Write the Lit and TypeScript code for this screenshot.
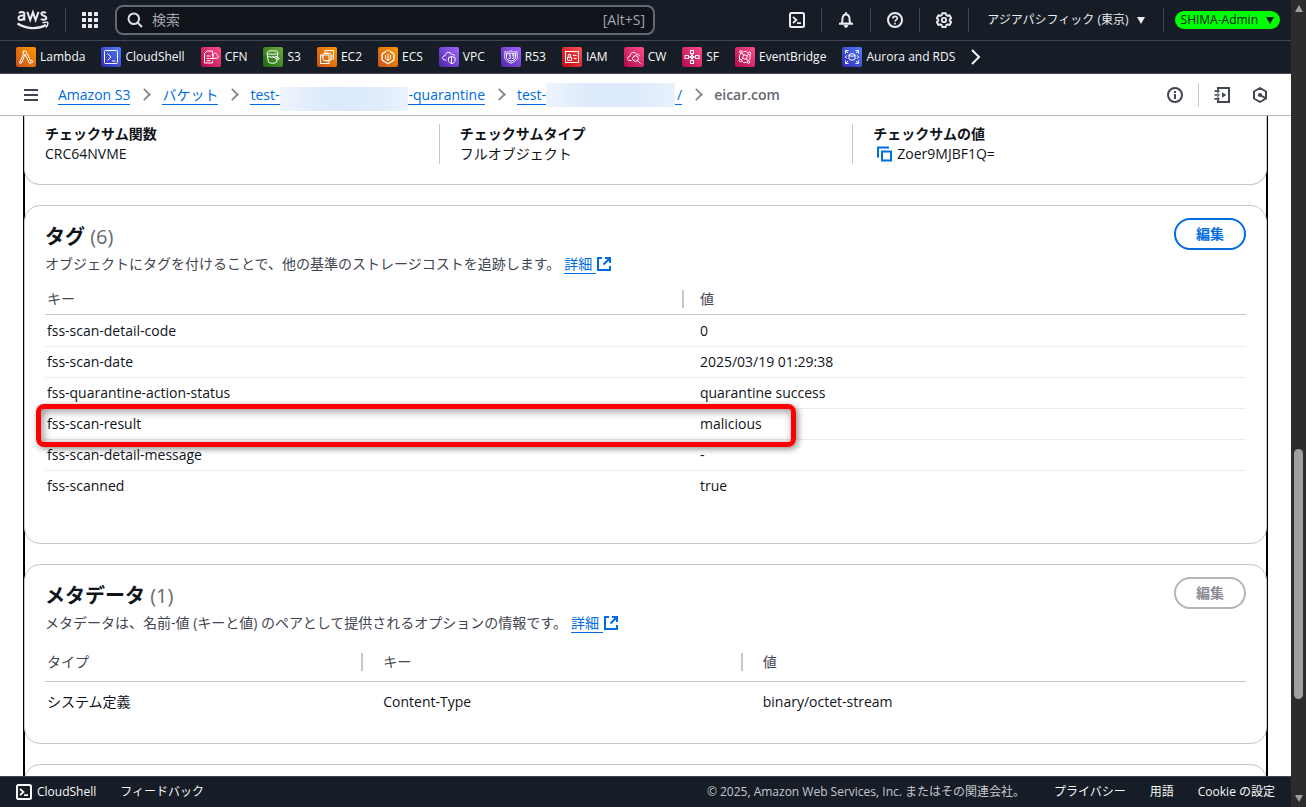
import { LitElement, html, svg, css } from "lit";
import { customElement, property } from "lit/decorators.js";

const base = css`
  *, *::before, *::after { box-sizing: border-box; }
  a { color: inherit; text-decoration: none; }
  button { font: inherit; color: inherit; background: none; border: 0; padding: 0; margin: 0; cursor: pointer; }
  svg { display: block; flex: none; fill: none; stroke: currentColor; }
`;

const icons: Record<string, unknown> = {
  menu: svg`<path d="M1 3h14M1 8h14M1 13h14" stroke-width="2"/>`,
  terminal: svg`<rect x="1" y="1" width="14" height="14" rx="1.5" stroke-width="2"/><path d="M4 5l3.4 3L4 11M8 11.2h4" stroke-width="1.8"/>`,
  bell: svg`<path d="M3.400 11.600c1-1.200 1.100-2.400 1.100-4.600 0-2.900 1.200-4.600 3.500-4.600s3.500 1.700 3.500 4.600c0 2.200.1 3.400 1.100 4.600zM1 11.800h14M8 .3v2" stroke-width="2"/><path d="M6.200 13.500c0 2.600 3.600 2.600 3.600 0z" fill="currentColor" stroke-width="1"/>`,
  help: svg`<circle cx="8" cy="8" r="7" stroke-width="2"/><path d="M5.800 6.500C5.800 3.600 10.300 3.700 10.300 6.300 10.300 7.900 8 7.900 8 9.600M8 10.800v1.700" stroke-width="1.700"/>`,
  gear: svg`<path d="M6.200 1.200h3.600l.5 1.900 1.300.8 2-.7 1.600 3-1.500 1.300v1.200l1.500 1.300-1.600 3-2-.7-1.300.8-.5 1.900H6.200l-.5-1.900-1.300-.8-2 .7-1.600-3 1.500-1.300V7.500L.8 6.200l1.600-3 2 .7 1.300-.8z" stroke-width="1.900" stroke-linejoin="round"/><circle cx="8" cy="8" r="2.200" stroke-width="1.800"/>`,
  search: svg`<circle cx="6.800" cy="6.800" r="5.300" stroke-width="2"/><path d="M10.500 10.500l4.500 4.500" stroke-width="2"/>`,
  info: svg`<circle cx="8" cy="8" r="7" stroke-width="2"/><path d="M8 7v5M8 4v2" stroke-width="2"/>`,
  notebook: svg`<path d="M4 3V1h11v14H4v-2M4 5.500v1M4 9.500v1" stroke-width="2"/><path d="M.5 4.200h5M.5 8h5M.5 11.800h5" stroke-width="1.700"/><path d="M8 5.200L12.300 8 8 10.800z" fill="currentColor" stroke="none"/>`,
  hexagon: svg`<path d="M8 1l6 3.500v7L8 15l-6-3.500v-7z" stroke-width="2" stroke-linejoin="round"/><circle cx="8" cy="8" r="2.100" fill="currentColor" stroke="none"/><path d="M8 8l5.500 3.200" stroke-width="2"/>`,
  external: svg`<path d="M6 2H2v12h12v-4M9 2h5v5M7.500 8.500L14 2" stroke-width="2"/>`,
  copy: svg`<path d="M6 6h9v9H6zM2 12V2h11" transform="translate(0 -.5)" stroke-width="2"/>`,
};

const glyphs: Record<string, unknown> = {
  lambda: svg`<path d="M7 4h2.800l4.700 10 1.500-.6.700 1.800-3.200 1.200L9 7.200 5.500 16H3.400L8 6H7z"/>`,
  shell: svg`<rect x="3.500" y="3.500" width="13" height="13" rx="1"/><path d="M6.500 6.500L10 10l-3.500 3.500M11 14h3.500"/>`,
  cfn: svg`<path d="M11.500 9.500V4H6L3.500 6.500V16h8v-2.500M5.500 9h4M5.500 11.500h3M5.500 13.800h4M9 11.500h3.500M12 9.500c0-2.500 1.200-3.500 2.500-3.200 1.500.3 1.200 1.700 2 2 1.400.6.800 3-.7 3H12z"/>`,
  s3: svg`<ellipse cx="9.500" cy="5.500" rx="5.500" ry="1.800"/><path d="M4 5.500l1.400 9.500c1.200 1.700 7 1.700 8.200 0L15 5.500M9.500 9.500l4.500 2.500c2.500 1 3-.3 1-1.800M4.500 9c2 1.500 8 1.600 9.800.2"/>`,
  ec2: svg`<rect x="3.500" y="8" width="8.500" height="8.500"/><path d="M8 6.500v-3h8.500V12h-3"/><rect x="6" y="6.500" width="8" height="7" rx="1"/><path d="M4.500 10H6M14 9h2M10 5v1.500M10 13.500V15"/>`,
  ecs: svg`<path d="M8 5l-4 2.300v5.400L10 16.500l6-3.800V7.300L12 5M10 3l6 3.500v7L10 17l-6-3.500v-7z" stroke-width=".9"/><path d="M10 7v6.500M7.500 8v3.500L10 13.500l2.500-2V8"/>`,
  vpc: svg`<path d="M7.500 13H6c-3.200 0-3.200-4 0-4.300C6.200 5.200 11.400 4 12.500 7.500c1.500-.5 3 .2 3.200 1.500"/><path d="M9.500 10.500l3-1 3.500 1v3c0 1.700-1.500 2.500-3 3.200-1.600-.7-3.500-1.500-3.500-3.200zM12.500 10v6"/>`,
  r53: svg`<path d="M4 4.500c2 1 4 .7 6-.8 2 1.500 4 1.800 6 .8.500 2-.3 3 .3 5s-.8 4.200-6.300 6.800C4.500 13.700 3.100 11.500 3.700 9.500s-.2-3 .3-5z" stroke-width=".9"/><path d="M5.500 6.500c2 .5 3 .2 4.500-.7 1.500.9 2.500 1.200 4.500.7v4c0 1.800-2 2.500-4.500 3.800C7.500 13 5.500 12.300 5.500 10.500zM8 8h1.200v3.500H7.700M11 8h2l-1 1.500c2 .6.700 2.300-1 2"/>`,
  iam: svg`<rect x="3.500" y="4.500" width="13" height="11"/><path d="M11 8.500h3.500M11.500 11.500h3M5.500 13.300v-3h4v3zM6.300 10.300V7.500h2.200v2.800M9 4.500h2"/>`,
  cw: svg`<path d="M7.500 13.500H6c-3.300 0-3.300-4 0-4.300C6.200 5 11.500 4.200 12.500 7.500c1.300-.4 3 .3 3.200 1.700"/><circle cx="11.500" cy="11.500" r="2.800"/><path d="M13.500 13.500l3 3"/>`,
  sf: svg`<rect x="8.500" y="3.500" width="3" height="3"/><rect x="8.500" y="13.500" width="3" height="3"/><rect x="3" y="8.500" width="3.500" height="3"/><rect x="13.500" y="8.500" width="3.500" height="3"/><path d="M6.500 10h7M10 6.500v7M8 10l2-2 2 2-2 2z"/>`,
  eb: svg`<circle cx="10" cy="10" r="2.200"/><circle cx="6" cy="5" r="1.300"/><circle cx="14.500" cy="6.500" r="1.300"/><circle cx="5.500" cy="13.500" r="1.300"/><circle cx="13.500" cy="15" r="1.300"/><path d="M7 6l2 2.200M13.300 7.500L12 9M6.500 12.500L8 11M13 13.800L11.500 12M8.500 4.500h3l1 1.300M15 8v3.500l-1.500 2M11.500 15.500h-3l-1.500-1.300M4.500 12V8.500l1-2"/>`,
  rds: svg`<path d="M3.500 6.500v-3h3M13.500 3.500h3v3M16.500 13.500v3h-3M6.500 16.500h-3v-3M4 4l2 2M16 4l-2 2M4 16l2-2M16 16l-2-2M4.500 8.500L3.500 10l1 1.500M15.500 8.500l1 1.500-1 1.500"/><ellipse cx="10" cy="8" rx="3" ry="1.200"/><path d="M7 8v4c.5 1.600 5.500 1.600 6 0V8"/>`,
};

@customElement("ui-icon")
export class UiIcon extends LitElement {
  @property() name = "";
  static styles = [base, css`:host { display: block; flex: none; width: 16px; height: 16px; }`];
  render() {
    return html`<svg width="16" height="16" viewBox="0 0 16 16" aria-hidden="true">${icons[this.name]}</svg>`;
  }
}

@customElement("service-link")
export class ServiceLink extends LitElement {
  @property() label = "";
  @property() glyph = "";
  @property() tone = "";
  static styles = [base, css`
    :host { display: block; }
    .link { display: flex; align-items: center; gap: 4px; white-space: nowrap; }
    .tile { display: block; width: 20px; height: 20px; border-radius: 2px; color: #fff; }
    .orange { background: linear-gradient(45deg, #c8511b, #ff9900); }
    .blue { background: linear-gradient(45deg, #2e27ad, #527fff); }
    .pink { background: linear-gradient(45deg, #b0084d, #ff4f8b); }
    .green { background: linear-gradient(45deg, #1b660f, #6cae3e); }
    .purple { background: linear-gradient(45deg, #4d27a8, #a166ff); }
    .red { background: linear-gradient(45deg, #bd0816, #ff5252); }
  `];
  render() {
    return html`<a class="link" href="#"><span class="tile ${this.tone}"><svg width="20" height="20" viewBox="0 0 20 20" aria-hidden="true">${glyphs[this.glyph]}</svg></span><span>${this.label}</span></a>`;
  }
}

const services = [
  ["Lambda", "lambda", "orange"], ["CloudShell", "shell", "blue"], ["CFN", "cfn", "pink"],
  ["S3", "s3", "green"], ["EC2", "ec2", "orange"], ["ECS", "ecs", "orange"],
  ["VPC", "vpc", "purple"], ["R53", "r53", "purple"], ["IAM", "iam", "red"],
  ["CW", "cw", "pink"], ["SF", "sf", "pink"], ["EventBridge", "eb", "pink"],
  ["Aurora and RDS", "rds", "blue"],
];

const tags = [
  ["fss-scan-detail-code", "0"],
  ["fss-scan-date", "2025/03/19 01:29:38"],
  ["fss-quarantine-action-status", "quarantine success"],
  ["fss-scan-result", "malicious"],
  ["fss-scan-detail-message", "-"],
  ["fss-scanned", "true"],
];

@customElement("app-root")
export class AppRoot extends LitElement {
  static styles = [base, css`
    :host {
      display: grid;
      grid-template-columns: minmax(0, 1fr) 15px;
      height: 100vh;
      overflow: hidden;
      background: #fff;
      color: #0f141a;
      font: 14px/20px "Open Sans", "Noto Sans CJK JP", sans-serif;
    }
    .page { display: flex; flex-direction: column; min-height: 0; height: 100vh; }

    .top { display: flex; align-items: center; height: 41px; flex: none; background: #161d26; border-bottom: 1px solid #424650; color: #ebebf0; padding: 0 11px 0 16px; font-size: 12px; }
    .rule { width: 1px; height: 24px; background: #424650; flex: none; }
    .logo { margin-right: 16px; }
    .apps { margin: 0 17px 0 16px; }
    .apps svg { fill: currentColor; stroke: none; }
    .search { display: flex; align-items: center; flex: 0 1 540px; height: 30px; border: 2px solid #656871; border-radius: 8px; background: #0f141a; padding: 0 8px 0 10px; gap: 9px; font-size: 14px; color: #a4a4ad; }
    .search input { flex: 1; min-width: 0; border: 0; outline: 0; background: none; font: inherit; color: inherit; padding: 0; }
    .search input::placeholder { color: #a4a4ad; opacity: 1; }
    .search ui-icon { color: #dedee3; }
    .tools { display: flex; align-items: center; gap: 16px; margin-left: auto; white-space: nowrap; }
    .drop { display: flex; align-items: center; gap: 8px; }
    .drop::after { content: ""; border: 4px solid transparent; border-top: 7px solid currentColor; border-bottom: 0; }
    .region { margin-left: 2px; margin-right: 2px; }
    .user { background: #00ff00; color: #0f141a; border-radius: 9px; height: 18px; line-height: 18px; padding: 0 6px; margin-left: -5px; }

    .services { display: flex; align-items: center; gap: 16px; flex: none; height: 33px; padding: 0 16px; background: #161d26; border-bottom: 1px solid #424650; color: #f9f9fa; font-size: 12px; font-weight: 500; }

    .crumbs { display: flex; align-items: center; flex: none; height: 42px; border-bottom: 1px solid #b4b4bb; padding: 0 23px; color: #424650; }
    .trail { display: flex; align-items: center; gap: 12px; margin: 0 auto 0 19px; padding: 0; list-style: none; color: #006ce0; white-space: nowrap; }
    .trail li { display: flex; align-items: center; gap: 11px; }
    .trail li + li::before { content: ""; width: 9px; height: 9px; border: solid #8c8c94; border-width: 2px 2px 0 0; transform: translateX(-2px) rotate(45deg); }
    .trail a { display: flex; align-items: center; height: 20px; padding-top: 2px; border-bottom: 1px solid #006ce0; }
    .here { color: #656871; font-weight: 600; }
    .veil { width: 128px; height: 24px; margin-right: 1px; background: linear-gradient(90deg, #edf4fd, #dbe9fb 40%, #deebfb 70%, #e9f2fd); }
    .low { margin-top: 8px; }
    .wide { width: 129px; margin-right: 2px; }
    .aids { display: flex; align-items: center; gap: 15px; }
    .aids .rule { background: #c6c6cd; }
    .aids .last { margin-left: 7px; }

    .content { flex: 1; min-height: 0; overflow: hidden; padding: 0 23px; }
    .frame { border: solid #000; border-width: 0 2px; }
    .card { border: 1px solid #c6c6cd; border-radius: 16px; background: #fff; margin: 0 -1px 20px; padding: 12px 20px 0; }
    .facts { display: grid; grid-template-columns: repeat(3, 1fr); border-top: 0; border-radius: 0 0 16px 16px; padding: 8px 0 20px; }
    .fact { padding-left: 20px; }
    .fact + .fact { border-left: 1px solid #c6c6cd; }
    dl, dt, dd, h2, p { margin: 0; }
    dt { font-weight: 700; }
    .copy { display: flex; align-items: center; gap: 5px; padding-left: 3px; }
    .copy button { color: #006ce0; }

    .head { display: flex; align-items: flex-start; justify-content: space-between; }
    .titles { padding-top: 7px; }
    h2 { font-size: 20px; line-height: 24px; }
    .count { font-weight: 400; color: #656871; }
    .note { display: flex; gap: 4px; color: #424650; margin-top: 5px; white-space: nowrap; }
    .ext { display: flex; align-items: center; color: #006ce0; }
    .ext span { border-bottom: 1px solid #006ce0; padding-right: 4px; height: 20px; }
    .edit { height: 32px; border: 2px solid #006ce0; border-radius: 16px; padding: 0 20px; color: #006ce0; font-weight: 700; }
    .edit:disabled { border-color: #b4b4bb; color: #8c8c94; cursor: default; }

    table { width: 100%; border-collapse: separate; border-spacing: 0; table-layout: fixed; }
    th, td { text-align: left; font-weight: 400; padding: 5px 2px; }
    th { color: #424650; border-bottom: 1px solid #c6c6cd; }
    .label { display: flex; align-items: center; justify-content: space-between; }
    .split::after { content: ""; width: 2px; height: 18px; background: #c6c6cd; margin-right: -2px; }
    .tags { margin-top: 10px; }
    .tags td { border-bottom: 1px solid #ebebf0; }
    .tags tr:first-child td { padding-top: 6px; }
    .tags tr:last-child td { border-bottom: 0; }
    .tags .key { width: 53.2%; }
    .tags .val { padding-left: 16px; }
    .tags-card { padding-bottom: 42px; }
    .flagged { position: relative; }
    .mark { position: absolute; left: -9px; top: -5px; width: 63.3%; height: 43px; border: 5px solid #f00; border-radius: 8px; box-shadow: 2px 2px 6px rgba(0,0,0,.45), inset 2px 2px 8px rgba(0,0,0,.45); pointer-events: none; }
    .meta { margin-top: 10px; }
    .meta th { padding: 9px 2px; }
    .meta td { padding: 10px 2px; }
    .meta .type { width: 26.5%; }
    .meta .key { width: 31.6%; }
    .meta .gap { padding-left: 20px; }
    .meta-card { padding-bottom: 21px; }
    .stub { height: 180px; }

    footer { display: flex; align-items: center; flex: none; height: 31px; border-top: 1px solid #424650; background: #161d26; color: #f9f9fa; padding: 0 16px; gap: 24px; font-size: 12px; white-space: nowrap; }
    .cloud { display: flex; align-items: center; gap: 5px; }
    .legal { color: #c6c6cd; margin-left: auto; margin-right: 5px; }

    .scroll { display: flex; flex-direction: column; align-items: center; background: #2c2c2c; padding: 5px 0; }
    .arrow { border: 4px solid transparent; }
    .up { border-top: 0; border-bottom: 7px solid #9f9f9f; }
    .down { border-bottom: 0; border-top: 7px solid #9f9f9f; }
    .before { flex: 437; }
    .thumb { flex: 250; width: 9px; border-radius: 5px; background: #9f9f9f; }
    .after { flex: 96; }
  `];

  private more(id: string) {
    return html`<a class="ext" href="#${id}"><span>詳細</span><ui-icon name="external"></ui-icon></a>`;
  }

  render() {
    return html`
      <div class="page">
        <header class="top">
          <a class="logo" href="#" aria-label="AWS">
            <svg width="33" height="22" viewBox="0 0 33 22" stroke-width="2" aria-hidden="true">
              <path d="M3 4.200C4.500 2.600 8.300 2.600 8.300 5v6.500M8.300 6.600C5 6.200 2.500 6.900 2.500 9c0 2.900 4.800 2.600 5.800-.6M11.300 2.800l2.900 8.200 2.700-7.700 2.700 7.700 2.900-8.200M30 3.800c-2-1.100-4.700-.8-4.700 1 0 2.400 5 1.500 5 4 0 2.300-3.500 2.400-5.500 1.200"/>
              <path d="M1.500 14.500c8.500 5.500 20 6.200 28.500 1.500" stroke-width="2.200"/><path d="M26.500 13.800c2-.9 5.200-.8 5.300-.1.200 1-.5 3.300-2 4.800" stroke-width="1.500"/>
            </svg>
          </a>
          <span class="rule"></span>
          <button class="apps" aria-label="サービス">
            <svg width="16" height="16" viewBox="0 0 16 16" aria-hidden="true">
              ${[0, 6, 12].map((y) => [0, 6, 12].map((x) => svg`<rect x=${x} y=${y} width="4" height="4" rx=".5"/>`))}
            </svg>
          </button>
          <label class="search"><ui-icon name="search"></ui-icon><input type="text" placeholder="検索" aria-label="検索"><span>[Alt+S]</span></label>
          <div class="tools">
            <button aria-label="CloudShell"><ui-icon name="terminal"></ui-icon></button><span class="rule"></span>
            <button aria-label="通知"><ui-icon name="bell"></ui-icon></button><span class="rule"></span>
            <button aria-label="ヘルプ"><ui-icon name="help"></ui-icon></button><span class="rule"></span>
            <button aria-label="設定"><ui-icon name="gear"></ui-icon></button><span class="rule"></span>
            <button class="drop region">アジアパシフィック (東京)</button><span class="rule"></span>
            <button class="drop user">SHIMA-Admin</button>
          </div>
        </header>
        <nav class="services" aria-label="お気に入り">
          ${services.map(([l, g, t]) => html`<service-link label=${l} glyph=${g} tone=${t}></service-link>`)}
          <button aria-label="次へ"><svg width="10" height="16" viewBox="0 0 10 16" stroke-width="2" aria-hidden="true"><path d="M1 1l7 7-7 7"/></svg></button>
        </nav>
        <nav class="crumbs" aria-label="パンくずリスト">
          <button aria-label="メニュー"><ui-icon name="menu"></ui-icon></button>
          <ol class="trail">
            <li><a href="#">Amazon S3</a></li>
            <li><a href="#">バケット</a></li>
            <li><a href="#">test-<span class="veil low"></span>-quarantine</a></li>
            <li><a href="#">test-<span class="veil wide"></span>/</a></li>
            <li><span class="here">eicar.com</span></li>
          </ol>
          <div class="aids">
            <button aria-label="情報"><ui-icon name="info"></ui-icon></button><span class="rule"></span>
            <button aria-label="チュートリアル"><ui-icon name="notebook"></ui-icon></button>
            <button class="last" aria-label="診断"><ui-icon name="hexagon"></ui-icon></button>
          </div>
        </nav>
        <main class="content">
          <div class="frame">
            <dl class="card facts">
              <div class="fact"><dt>チェックサム関数</dt><dd>CRC64NVME</dd></div>
              <div class="fact"><dt>チェックサムタイプ</dt><dd>フルオブジェクト</dd></div>
              <div class="fact"><dt>チェックサムの値</dt><dd class="copy"><button aria-label="コピー"><ui-icon name="copy"></ui-icon></button>Zoer9MJBF1Q=</dd></div>
            </dl>
            <section class="card tags-card">
              <div class="head">
                <div class="titles">
                  <h2>タグ <span class="count">(6)</span></h2>
                  <p class="note">オブジェクトにタグを付けることで、他の基準のストレージコストを追跡します。${this.more("tags")}</p>
                </div>
                <button class="edit">編集</button>
              </div>
              <table class="tags">
                <thead><tr><th class="key"><div class="label split">キー</div></th><th class="val">値</th></tr></thead>
                <tbody>
                  ${tags.map(([k, v]) => k === "fss-scan-result"
                    ? html`<tr class="flagged"><td>${k}<span class="mark"></span></td><td class="val">${v}</td></tr>`
                    : html`<tr><td>${k}</td><td class="val">${v}</td></tr>`)}
                </tbody>
              </table>
            </section>
            <section class="card meta-card">
              <div class="head">
                <div class="titles">
                  <h2>メタデータ <span class="count">(1)</span></h2>
                  <p class="note">メタデータは、名前-値 (キーと値) のペアとして提供されるオプションの情報です。${this.more("meta")}</p>
                </div>
                <button class="edit" disabled>編集</button>
              </div>
              <table class="meta">
                <thead><tr><th class="type"><div class="label split">タイプ</div></th><th class="key gap"><div class="label split">キー</div></th><th class="gap">値</th></tr></thead>
                <tbody><tr><td>システム定義</td><td class="gap">Content-Type</td><td class="gap">binary/octet-stream</td></tr></tbody>
              </table>
            </section>
            <section class="card stub"></section>
          </div>
        </main>
        <footer>
          <button class="cloud"><ui-icon name="terminal"></ui-icon>CloudShell</button>
          <a href="#">フィードバック</a>
          <span class="legal">© 2025, Amazon Web Services, Inc. またはその関連会社。</span>
          <a href="#">プライバシー</a>
          <a href="#">用語</a>
          <a href="#">Cookie の設定</a>
        </footer>
      </div>
      <div class="scroll" aria-hidden="true">
        <span class="arrow up"></span><span class="before"></span><span class="thumb"></span><span class="after"></span><span class="arrow down"></span>
      </div>
    `;
  }
}
